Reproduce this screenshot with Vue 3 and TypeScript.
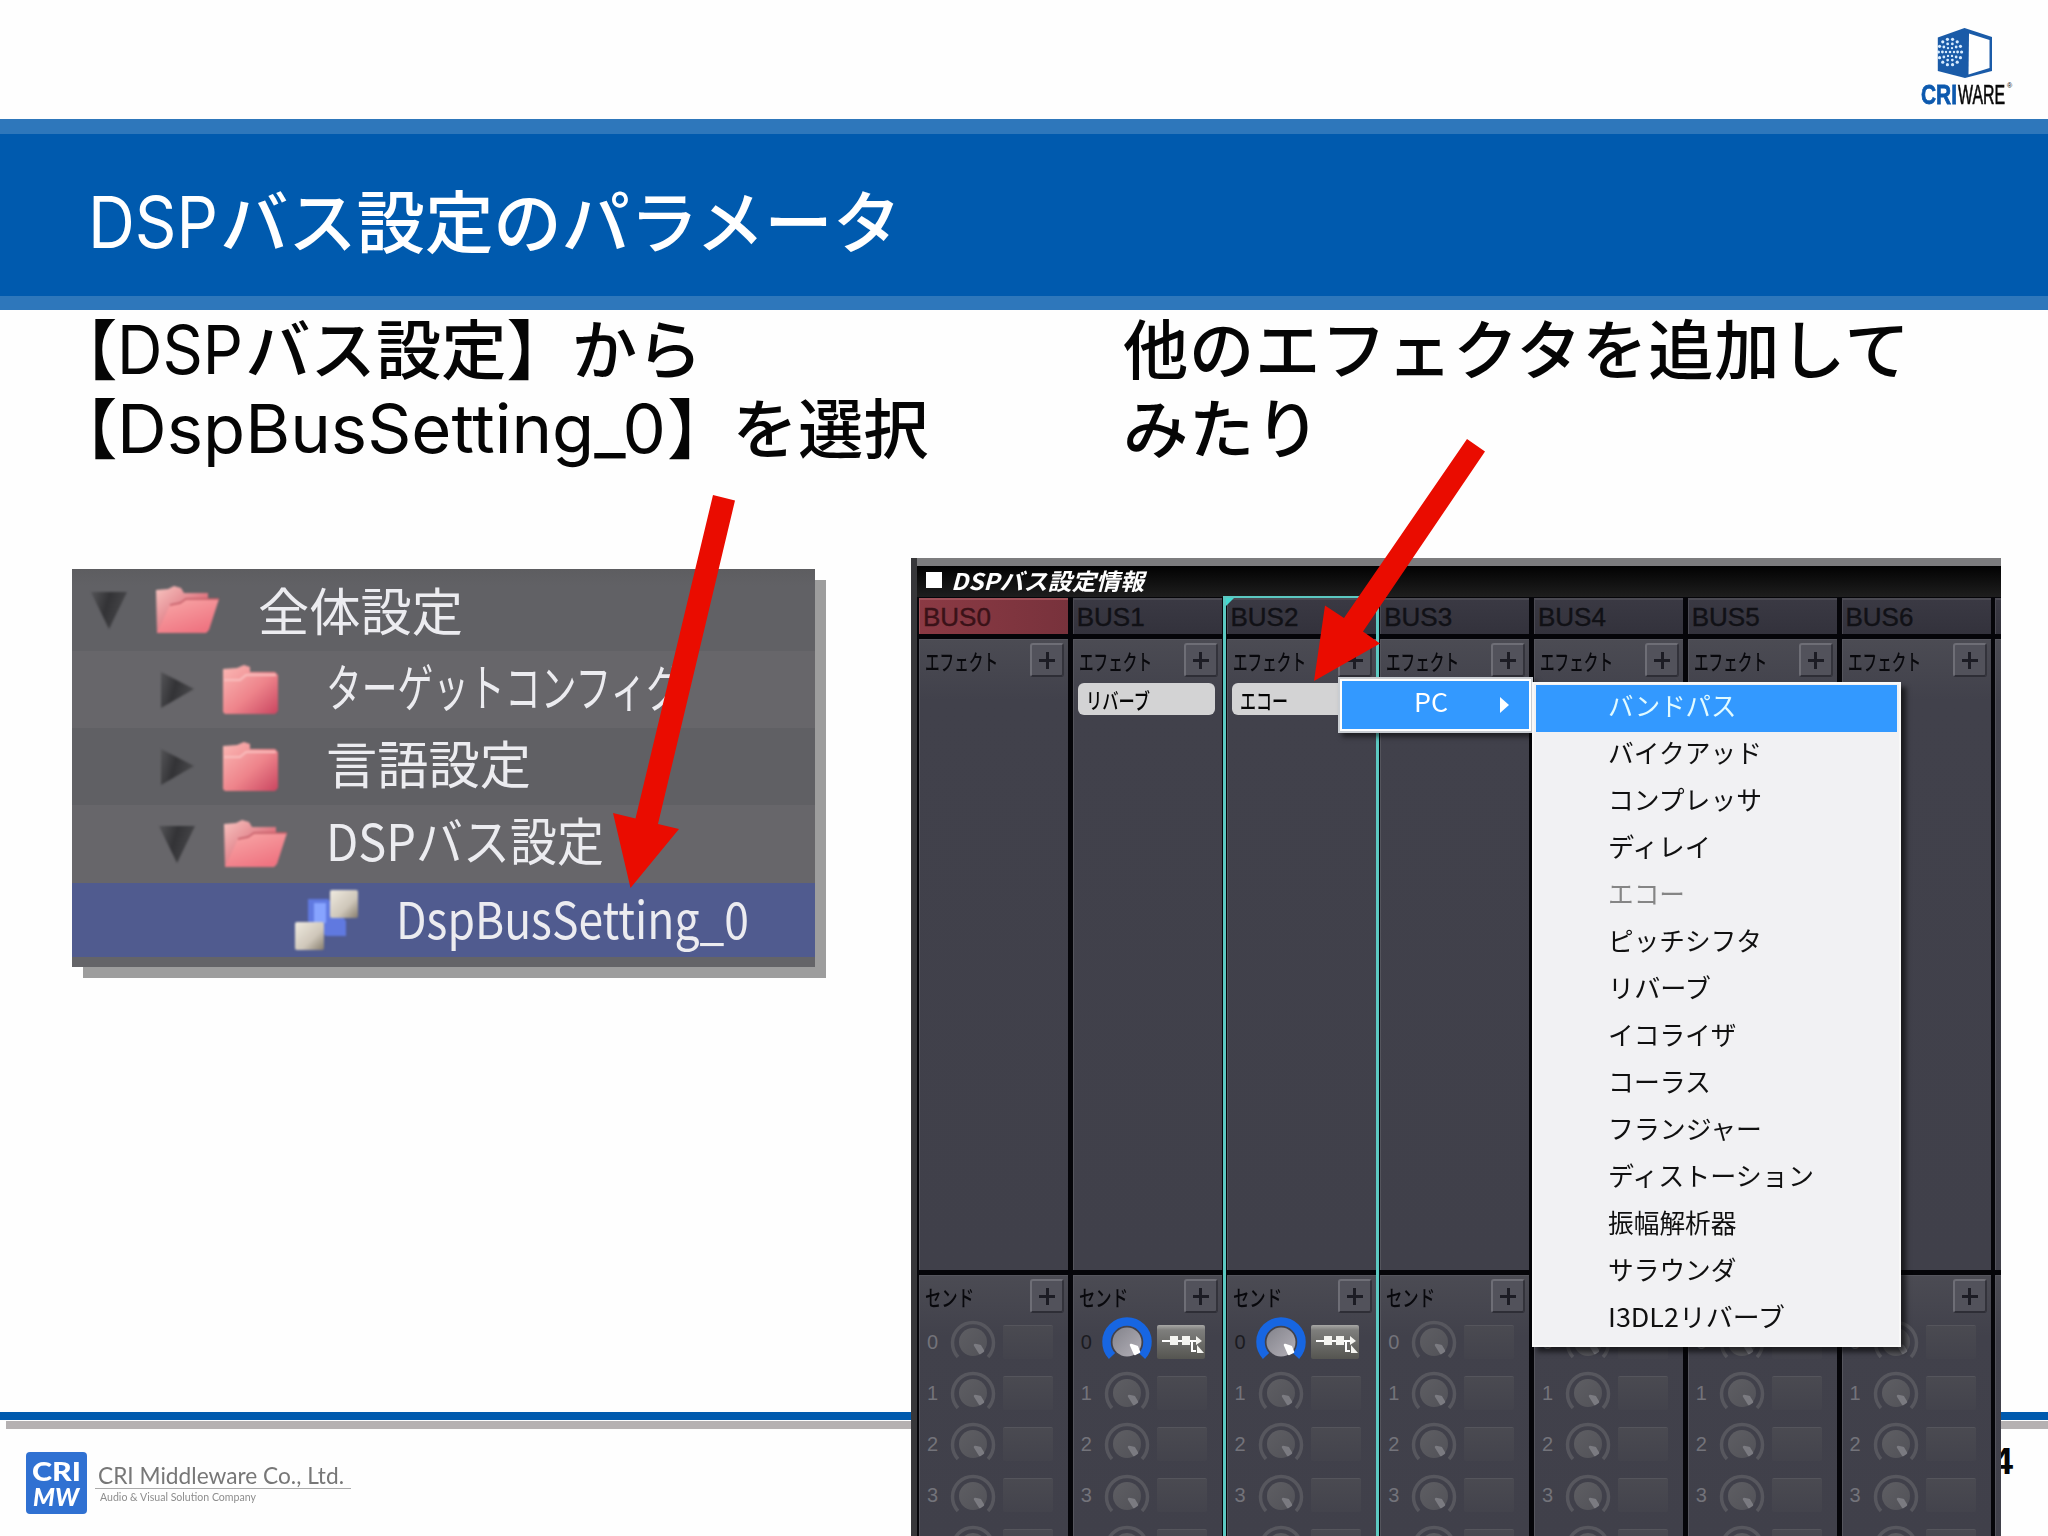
<script setup lang="ts">
import type { Directive } from 'vue'

// Scales a run of text horizontally so that it takes exactly the given width.
const vFit: Directive<HTMLElement, number> = {
  mounted(el, { value }) {
    const natural = el.getBoundingClientRect().width
    if (natural > 0) el.style.transform = `scaleX(${value / natural})`
  },
}

interface Bus {
  name: string
  effect?: string
  effectWidth?: number
  master?: boolean
  selected?: boolean
  sending?: boolean
}

const buses: Bus[] = [
  { name: 'BUS0', master: true },
  { name: 'BUS1', effect: 'リバーブ', effectWidth: 64, sending: true },
  { name: 'BUS2', effect: 'エコー', effectWidth: 48, selected: true, sending: true },
  { name: 'BUS3' },
  { name: 'BUS4' },
  { name: 'BUS5' },
  { name: 'BUS6' },
  { name: '' },
]

// The last row only shows the top of its knob, so it carries no number.
const sends = ['0', '1', '2', '3', '']

const effects = [
  { label: 'バンドパス', width: 128.5, state: 'active' },
  { label: 'バイクアッド', width: 154 },
  { label: 'コンプレッサ', width: 154 },
  { label: 'ディレイ', width: 103 },
  { label: 'エコー', width: 77, state: 'disabled' },
  { label: 'ピッチシフタ', width: 154 },
  { label: 'リバーブ', width: 103 },
  { label: 'イコライザ', width: 128.5 },
  { label: 'コーラス', width: 103 },
  { label: 'フランジャー', width: 154 },
  { label: 'ディストーション', width: 206 },
  { label: '振幅解析器', width: 128.5 },
  { label: 'サラウンダ', width: 128.5 },
  { label: 'I3DL2リバーブ', width: 177 },
]

const tree = [
  { label: '全体設定', width: 205, level: 0, open: true, folder: true },
  { label: 'ターゲットコンフィグ', width: 356, level: 1, open: false, folder: true },
  { label: '言語設定', width: 205, level: 1, open: false, folder: true },
  { label: 'DSPバス設定', width: 278, level: 1, open: true, folder: true },
  { label: 'DspBusSetting_0', width: 353, level: 2, open: false, folder: false },
]

// Dots of the speaker grille in the CRIWARE cube.
const dots: { x: number; y: number; r: number }[] = [{ x: 13, y: 25, r: 1.3 }]
for (const [ring, count, r] of [[4, 6, 1.2], [7.6, 10, 1.4], [11.6, 14, 1.6]]) {
  for (let i = 0; i < count; i++) {
    const a = (i / count) * Math.PI * 2
    dots.push({ x: 13 + Math.cos(a) * ring, y: 25 + Math.sin(a) * ring * 1.12, r })
  }
}
</script>

<template>
  <div class="slide">
    <header class="top">
      <div class="criware">
        <svg width="56" height="52" viewBox="0 0 56 52">
          <path d="M.8 10.5 27.5 1 55 10v34L28 51 .8 44z" fill="#1a5ba8" />
          <path d="M32 6.5 52.5 13v28L31.500 47.500z" fill="#fff" />
          <g fill="#d8ecff">
            <circle v-for="(d, i) in dots" :key="i" :cx="d.x" :cy="d.y" :r="d.r" />
          </g>
        </svg>
        <div class="criware-name">
          <b><span v-fit="36" class="fit">CRI</span></b>
          <i><span v-fit="47" class="fit">WARE</span></i>
          <sup>®</sup>
        </div>
      </div>
    </header>

    <div class="band">
      <h1><span class="lat lat-title"><span v-fit="130" class="fit">DSP</span></span>バス設定のパラメータ</h1>
    </div>

    <main class="body">
      <section class="left">
        <p class="copy">
          【<span class="lat lat-short"><span v-fit="126" class="fit">DSP</span></span>バス設定】から<br />【<span class="lat lat-long"><span v-fit="549" class="fit">DspBusSetting_0</span></span>】を選択
        </p>
        <div class="tree">
          <div v-for="row in tree" :key="row.label" class="row" :class="[`level-${row.level}`, { selected: !row.folder }]">
            <svg v-if="row.folder" class="twisty" width="38" height="40" viewBox="0 0 38 40">
              <path v-if="row.open" d="M1 2h36L19 39z" fill="url(#twist)" />
              <path v-else d="M3 2 36 19 3 38z" fill="url(#twist)" />
            </svg>
            <svg v-if="row.folder" class="icon" width="66" height="52" viewBox="0 0 66 52">
              <template v-if="row.open">
                <path d="M2 6l12-1 6-3 7 2 3 5h24v12L46 49H3z" fill="url(#back)" />
                <path d="M16 21l10-2 6-4h33L55 46l-3 3H3z" fill="url(#front)" />
                <path d="M16 21l10-2 6-4h33" fill="none" stroke="#c25c66" stroke-width="1.500" />
              </template>
              <template v-else>
                <path d="M1 5l14-1 7-3 6 2v5h25l3 3v36l-3 3H3l-2-2z" fill="url(#closed)" />
                <path d="M2 16h16l6-5h30" fill="none" stroke="#f9bfbe" stroke-width="2" />
              </template>
            </svg>
            <svg v-else class="icon" width="66" height="62" viewBox="0 0 66 62">
              <path d="M14 10h20l18 22v15H32L14 32z" fill="#6079e0" />
              <path d="M20 14h12v20H20z" fill="#87a4ff" />
              <rect x="36" y="1" width="28" height="28" rx="2" fill="url(#cube)" />
              <rect x="1" y="33" width="29" height="28" rx="2" fill="url(#cube)" />
            </svg>
            <span class="label"><span v-fit="row.width" class="fit">{{ row.label }}</span></span>
          </div>
        </div>
      </section>

      <section class="right">
        <p class="copy">他のエフェクタを追加して<br />みたり</p>
        <div class="mixer">
          <div class="mixer-title"><i class="square"></i><span v-fit="193" class="fit">DSPバス設定情報</span></div>
          <div class="buses">
            <div v-for="(bus, n) in buses" :key="n" class="bus" :class="{ selected: bus.selected }">
              <div class="bus-name" :class="{ master: bus.master }">{{ bus.name }}</div>
              <div class="effects">
                <div class="cell-head">
                  <span class="caption"><span v-fit="73" class="fit">エフェクト</span></span><button class="plus"></button>
                </div>
                <div v-if="bus.effect" class="chip"><span v-fit="bus.effectWidth ?? 64" class="fit">{{ bus.effect }}</span></div>
              </div>
              <div class="sends">
                <div class="cell-head">
                  <span class="caption"><span v-fit="49" class="fit">センド</span></span><button class="plus"></button>
                </div>
                <div v-for="(s, k) in sends" :key="k" class="send" :class="{ on: bus.sending && k === 0 }">
                  <span class="num">{{ s }}</span>
                  <svg class="knob" width="52" height="51" viewBox="-26 -26 52 51">
                    <template v-if="bus.sending && k === 0">
                      <path d="M-15 14A20.500 20.500 0 1 1 15 14" fill="none" stroke="#1766e2" stroke-width="8.500" />
                      <circle r="14.500" fill="url(#knobOn)" />
                      <path d="M4 3l6 2 2 5-4 2z" fill="#fff" stroke="#fff" stroke-width="2.500" stroke-linejoin="round" />
                    </template>
                    <template v-else>
                      <path d="M-15 15A20.500 20.500 0 1 1 15 15" fill="none" stroke="#57575e" stroke-width="3.500" />
                      <circle r="14" fill="url(#knobOff)" />
                      <path d="M2 3l5 1 3 5-3 2z" fill="#7b7b81" stroke="#7b7b81" stroke-width="2.500" stroke-linejoin="round" />
                    </template>
                  </svg>
                  <span class="route">
                    <svg v-if="bus.sending && k === 0" width="48" height="34" viewBox="0 0 48 34">
                      <path d="M5 16h38M35 16v10h4" fill="none" stroke="#fff" stroke-width="2" />
                      <path d="M13 11h8v9h-8zM25 11h8v9h-8zM39 11l6 5-6 4zM40 20l7 8h-7z" fill="#f4f4f0" />
                    </svg>
                  </span>
                </div>
              </div>
            </div>
          </div>

          <div class="menu menu-root"><span v-fit="34" class="fit">PC</span><i class="caret"></i></div>
          <ul class="menu menu-sub">
            <li v-for="item in effects" :key="item.label" :class="item.state">
              <span v-fit="item.width" class="fit">{{ item.label }}</span>
            </li>
          </ul>
        </div>
      </section>
    </main>

    <footer class="foot">
      <div class="rule"></div>
      <div class="shade"></div>
      <div class="foot-row">
        <div class="crimw">
          <span v-fit="49" class="fit">CRI</span>
          <span v-fit="46" class="fit slant">MW</span>
        </div>
        <div class="company">
          <div class="company-name"><span v-fit="246" class="fit">CRI Middleware Co., Ltd.</span></div>
          <div class="company-tag"><span v-fit="156" class="fit">Audio &amp; Visual Solution Company</span></div>
        </div>
        <div class="page">4</div>
      </div>
    </footer>

    <svg class="arrows" width="2048" height="1536" viewBox="0 0 2048 1536">
      <defs>
        <linearGradient id="twist" x1="0" y1="0" x2="1" y2="0.300">
          <stop offset="0" stop-color="#545457" /><stop offset=".5" stop-color="#333336" /><stop offset="1" stop-color="#47474a" />
        </linearGradient>
        <linearGradient id="back" x1="0" y1="0" x2="1" y2="1">
          <stop offset="0" stop-color="#f8c5c1" /><stop offset=".6" stop-color="#dd7580" /><stop offset="1" stop-color="#c85f6b" />
        </linearGradient>
        <linearGradient id="front" x1="0" y1="0" x2="0.600" y2="1">
          <stop offset="0" stop-color="#f9aaa9" /><stop offset="1" stop-color="#ef7481" />
        </linearGradient>
        <linearGradient id="closed" x1="0" y1="0" x2="1" y2="1">
          <stop offset="0" stop-color="#fbb9b5" /><stop offset=".55" stop-color="#ee848b" /><stop offset="1" stop-color="#c94560" />
        </linearGradient>
        <linearGradient id="cube" x1="0" y1="0" x2="1" y2="1">
          <stop offset="0" stop-color="#f0ebe0" /><stop offset=".6" stop-color="#cfc7ba" /><stop offset="1" stop-color="#857c6c" />
        </linearGradient>
        <linearGradient id="knobOn" x1="0" y1="0" x2="1" y2="1">
          <stop offset="0" stop-color="#83838b" /><stop offset="1" stop-color="#b3b0b8" />
        </linearGradient>
        <linearGradient id="knobOff" x1="0" y1="0" x2="1" y2="1">
          <stop offset="0" stop-color="#5e5e63" /><stop offset="1" stop-color="#525258" />
        </linearGradient>
      </defs>
      <g fill="#ea0c00">
        <path d="M713 495 735 500.500 658 824 679 829 630.500 888 613 813 635.500 818.500z" />
        <path d="M1467 439 1485 451.500 1363 631.500 1380 643.500 1314 681 1325 605.500 1344 618z" />
      </g>
    </svg>
  </div>
</template>

<style>
body {
  margin: 0;
  background: #fdfdfe;
}
</style>

<style scoped>
.slide {
  position: relative;
  width: 2048px;
  height: 1536px;
  overflow: hidden;
  display: flex;
  flex-direction: column;
  background: #fefefe;
  color: #050505;
  font-family: "Noto Sans CJK JP", sans-serif;
}
.fit {
  display: inline-block;
  white-space: nowrap;
  transform-origin: 0 50%;
}

/* Top strip and title band */
.top {
  height: 119px;
  box-sizing: border-box;
  padding: 27px 34px 0 0;
  display: flex;
  justify-content: flex-end;
}
.criware {
  width: 93px;
  display: flex;
  flex-direction: column;
}
.criware svg {
  margin-left: 16px;
}
.criware-name {
  display: flex;
  height: 26px;
  margin-top: 3px;
  font: 27px/26px "Liberation Sans", sans-serif;
}
.criware-name b {
  width: 37px;
  color: #0c59ae;
  -webkit-text-stroke: 0.8px #0c59ae;
}
.criware-name i {
  width: 49px;
  font-style: normal;
  -webkit-text-stroke: 0.7px #151515;
}
.criware-name sup {
  font-size: 7px;
  line-height: 8px;
}
.band {
  height: 191px;
  box-sizing: border-box;
  border: solid #2e77bb;
  border-width: 15px 0 14px;
  background: #005aae;
}
h1 {
  margin: 0;
  padding: 4px 0 0 88px;
  font-size: 68.500px;
  font-weight: 500;
  line-height: 162px;
  letter-spacing: -0.200px;
  color: #fff;
  white-space: nowrap;
}
.lat {
  display: inline-block;
  font-family: Inter, "Liberation Sans", sans-serif;
  font-weight: 400;
  line-height: 60px;
  letter-spacing: 0;
}
.lat-title {
  width: 132px;
  font-size: 71px;
}
.lat-short {
  width: 128px;
  font-size: 67px;
}
.lat-long {
  width: 550px;
  font-size: 67px;
}

/* Content columns */
.body {
  height: 1102px;
  display: flex;
}
.left {
  width: 911px;
}
.right {
  width: 1090px;
}
.copy {
  margin: -3px 0 0;
  height: 262px;
  font-size: 65.300px;
  font-weight: 500;
  line-height: 78.500px;
  white-space: nowrap;
}
.left .copy {
  padding-left: 52px;
}
.right .copy {
  height: 251px;
  padding-left: 212px;
  letter-spacing: 0.700px;
}

/* Project tree */
.tree {
  width: 743px;
  height: 398px;
  margin-left: 72px;
  background: #646468;
  box-shadow: 11px 11px 0 #9d9d9d;
}
.row {
  height: 77px;
  display: flex;
  align-items: center;
  background: #67666a;
}
.row:first-child {
  height: 82px;
  background: linear-gradient(#5d5d60, #616165 20%);
}
.row:nth-child(3) {
  background: #606064;
}
.row:nth-child(4) {
  height: 78px;
}
.row.selected {
  height: 74px;
  background: #505b8f;
}
.row svg {
  flex: none;
  filter: blur(0.8px);
}
.twisty {
  margin-left: 18px;
  margin-right: 26px;
}
.level-1 .twisty {
  margin-left: 86px;
}
.level-2 .icon {
  margin-left: 222px;
}
.label {
  margin-left: 38px;
  padding-bottom: 10px;
  font-size: 51px;
  line-height: 60px;
  color: #ececf0;
  filter: blur(0.7px);
}
.level-0 .label {
  padding-bottom: 3px;
}
.level-2 .label {
  margin-left: 36px;
  padding-bottom: 6px;
}

/* Bus mixer */
.mixer {
  position: relative;
  z-index: 1;
  height: 978px;
  box-sizing: border-box;
  border-left: 6px solid #37373a;
  padding-left: 2px;
  overflow: hidden;
  background: #050509;
}
.mixer-title {
  height: 39px;
  box-sizing: border-box;
  margin-left: -2px;
  padding: 0 0 3px 9px;
  border-top: 8px solid #7c7c7e;
  display: flex;
  align-items: center;
  background: linear-gradient(#020202, #1e1e1e);
  color: #fff;
  font-size: 23px;
  font-weight: 700;
  font-style: italic;
  line-height: 28px;
}
.square {
  width: 16px;
  height: 16px;
  margin-right: 9px;
  background: #fff;
}
.buses {
  display: flex;
  gap: 4.750px;
}
.bus {
  position: relative;
  flex: none;
  width: 149px;
}
.bus.selected::before {
  content: "";
  position: absolute;
  inset: -1px -3px 0 -4px;
  border: solid #5cc9c2;
  border-width: 2px 3px 0;
  z-index: 1;
}
.bus.selected::after {
  content: "";
  position: absolute;
  left: -3px;
  top: 0;
  border: solid transparent;
  border-width: 0 11px 11px 0;
  border-top: 11px solid #45d8cf;
  border-bottom: 0;
}
.bus-name {
  height: 36px;
  margin-top: 1px;
  box-sizing: border-box;
  padding-left: 3px;
  border-top: 2px solid #4b4a53;
  border-left: 1px solid #4b4a53;
  background: linear-gradient(#3a3943, #33323c);
  color: #111116;
  font: 26px/34px "Liberation Sans", sans-serif;
  -webkit-text-stroke: 0.4px;
}
.bus-name.master {
  border-color: #a05058;
  background: linear-gradient(90deg, #8b3a44, #78323c);
  color: #3a1218;
}
.effects,
.sends {
  margin-top: 5px;
  box-sizing: border-box;
  border: solid #55555d;
  border-width: 1.500px 0 0 1px;
  background: linear-gradient(#4b4b53, #41414b 60px, #40404a);
}
.effects {
  height: 631px;
}
.sends {
  height: 262px;
}
.cell-head {
  height: 40px;
  padding: 0 4px 0 5px;
  display: flex;
  justify-content: space-between;
  align-items: center;
  color: #08080c;
  font-size: 22px;
  font-weight: 500;
  line-height: 40px;
}
.caption {
  width: 73px;
}
.plus {
  position: relative;
  flex: none;
  width: 34px;
  height: 34px;
  padding: 0;
  border: 2px solid;
  border-color: #6e6e76 #33333b #2e2e36 #6e6e76;
  border-radius: 3px;
  background:
    linear-gradient(#1c1c24, #1c1c24) center / 16px 3px no-repeat,
    linear-gradient(#1c1c24, #1c1c24) center / 3px 17px no-repeat,
    #52525b;
}
.chip {
  width: 137px;
  height: 32px;
  margin: 3px 0 0 4px;
  box-sizing: border-box;
  padding-left: 8px;
  border-radius: 6px;
  background: #d3d3d4;
  color: #050505;
  font-size: 22px;
  line-height: 32px;
  font-weight: 500;
}
.send {
  height: 51.200px;
  display: flex;
  align-items: center;
}
.num {
  width: 20px;
  padding-left: 7px;
  font: 20px/34px "Liberation Sans", sans-serif;
  color: #73737a;
}
.on .num {
  color: #1b1b20;
}
.route {
  width: 50px;
  height: 34px;
  box-sizing: border-box;
  margin-left: 4px;
  border: solid #55555c;
  border-width: 1.500px 0 0;
  border-radius: 2px;
  background: linear-gradient(#4a4a51, #43434c);
}
.on .route {
  width: 48px;
  border: 0;
  background: linear-gradient(#a8a8a6, #7e7e7c 15%, #555551);
}

/* Context menus */
.menu {
  position: absolute;
  box-sizing: border-box;
  margin: 0;
  padding: 0;
  z-index: 2;
  font-size: 25.700px;
}
.menu-root {
  left: 421px;
  top: 119px;
  width: 195px;
  height: 56px;
  border: 2px solid #c9cdd2;
  outline: 2px solid #fff;
  outline-offset: -4px;
  box-shadow: 4px 4px 5px #0008;
  background: #3399ff;
  color: #fff;
  padding: 0 22px 0 74px;
  display: flex;
  align-items: center;
  justify-content: space-between;
  line-height: 40px;
}
.menu-root .fit {
  margin-top: -9px;
}
.caret {
  border: solid transparent;
  border-width: 8px 0 8px 9px;
  border-left-color: #fff;
}
.menu-sub {
  left: 615px;
  top: 124px;
  width: 369px;
  height: 665px;
  padding: 1px 2px 0;
  border: solid #f8f8f8;
  border-width: 2px;
  box-shadow: 5px 5px 5px #0009;
  background: #f1f1f3;
  list-style: none;
}
.menu-sub li {
  height: 47px;
  padding-left: 72px;
  line-height: 39px;
  color: #101010;
}
.menu-sub li.active {
  background: #3399ff;
  color: #e2fbff;
}
.menu-sub li.disabled {
  color: #858585;
}

/* Footer */
.foot {
  flex: 1;
}
.rule {
  height: 8px;
  background: #005aae;
}
.shade {
  height: 8px;
  margin: 1px 0 0 6px;
  background: #b5b1b2;
}
.foot-row {
  display: flex;
  padding: 22.500px 35px 0 26px;
}
.crimw {
  width: 61px;
  height: 62px;
  box-sizing: border-box;
  padding: 6px 0 0 6px;
  display: flex;
  flex-direction: column;
  align-items: flex-start;
  border-radius: 4px;
  background: #3071d2;
  color: #fff;
  font: 900 27px/26px Lato, sans-serif;
}
.slant {
  margin-left: 1px;
  font-style: italic;
  font-size: 24px;
}
.company {
  width: 256px;
  margin: 10px 0 0 8px;
  color: #777;
  font-family: Lato, sans-serif;
}
.company-name {
  height: 26px;
  padding-left: 3px;
  border-bottom: 1px solid #aaa;
  font-size: 23px;
  line-height: 26px;
}
.company-tag {
  padding-left: 5px;
  font-size: 11.500px;
  line-height: 15px;
  color: #8d8d8d;
}
.page {
  margin: 0 0 0 auto;
  font: 700 37px/20px "Liberation Sans", sans-serif;
}

.arrows {
  position: absolute;
  inset: 0;
  z-index: 3;
}
</style>
